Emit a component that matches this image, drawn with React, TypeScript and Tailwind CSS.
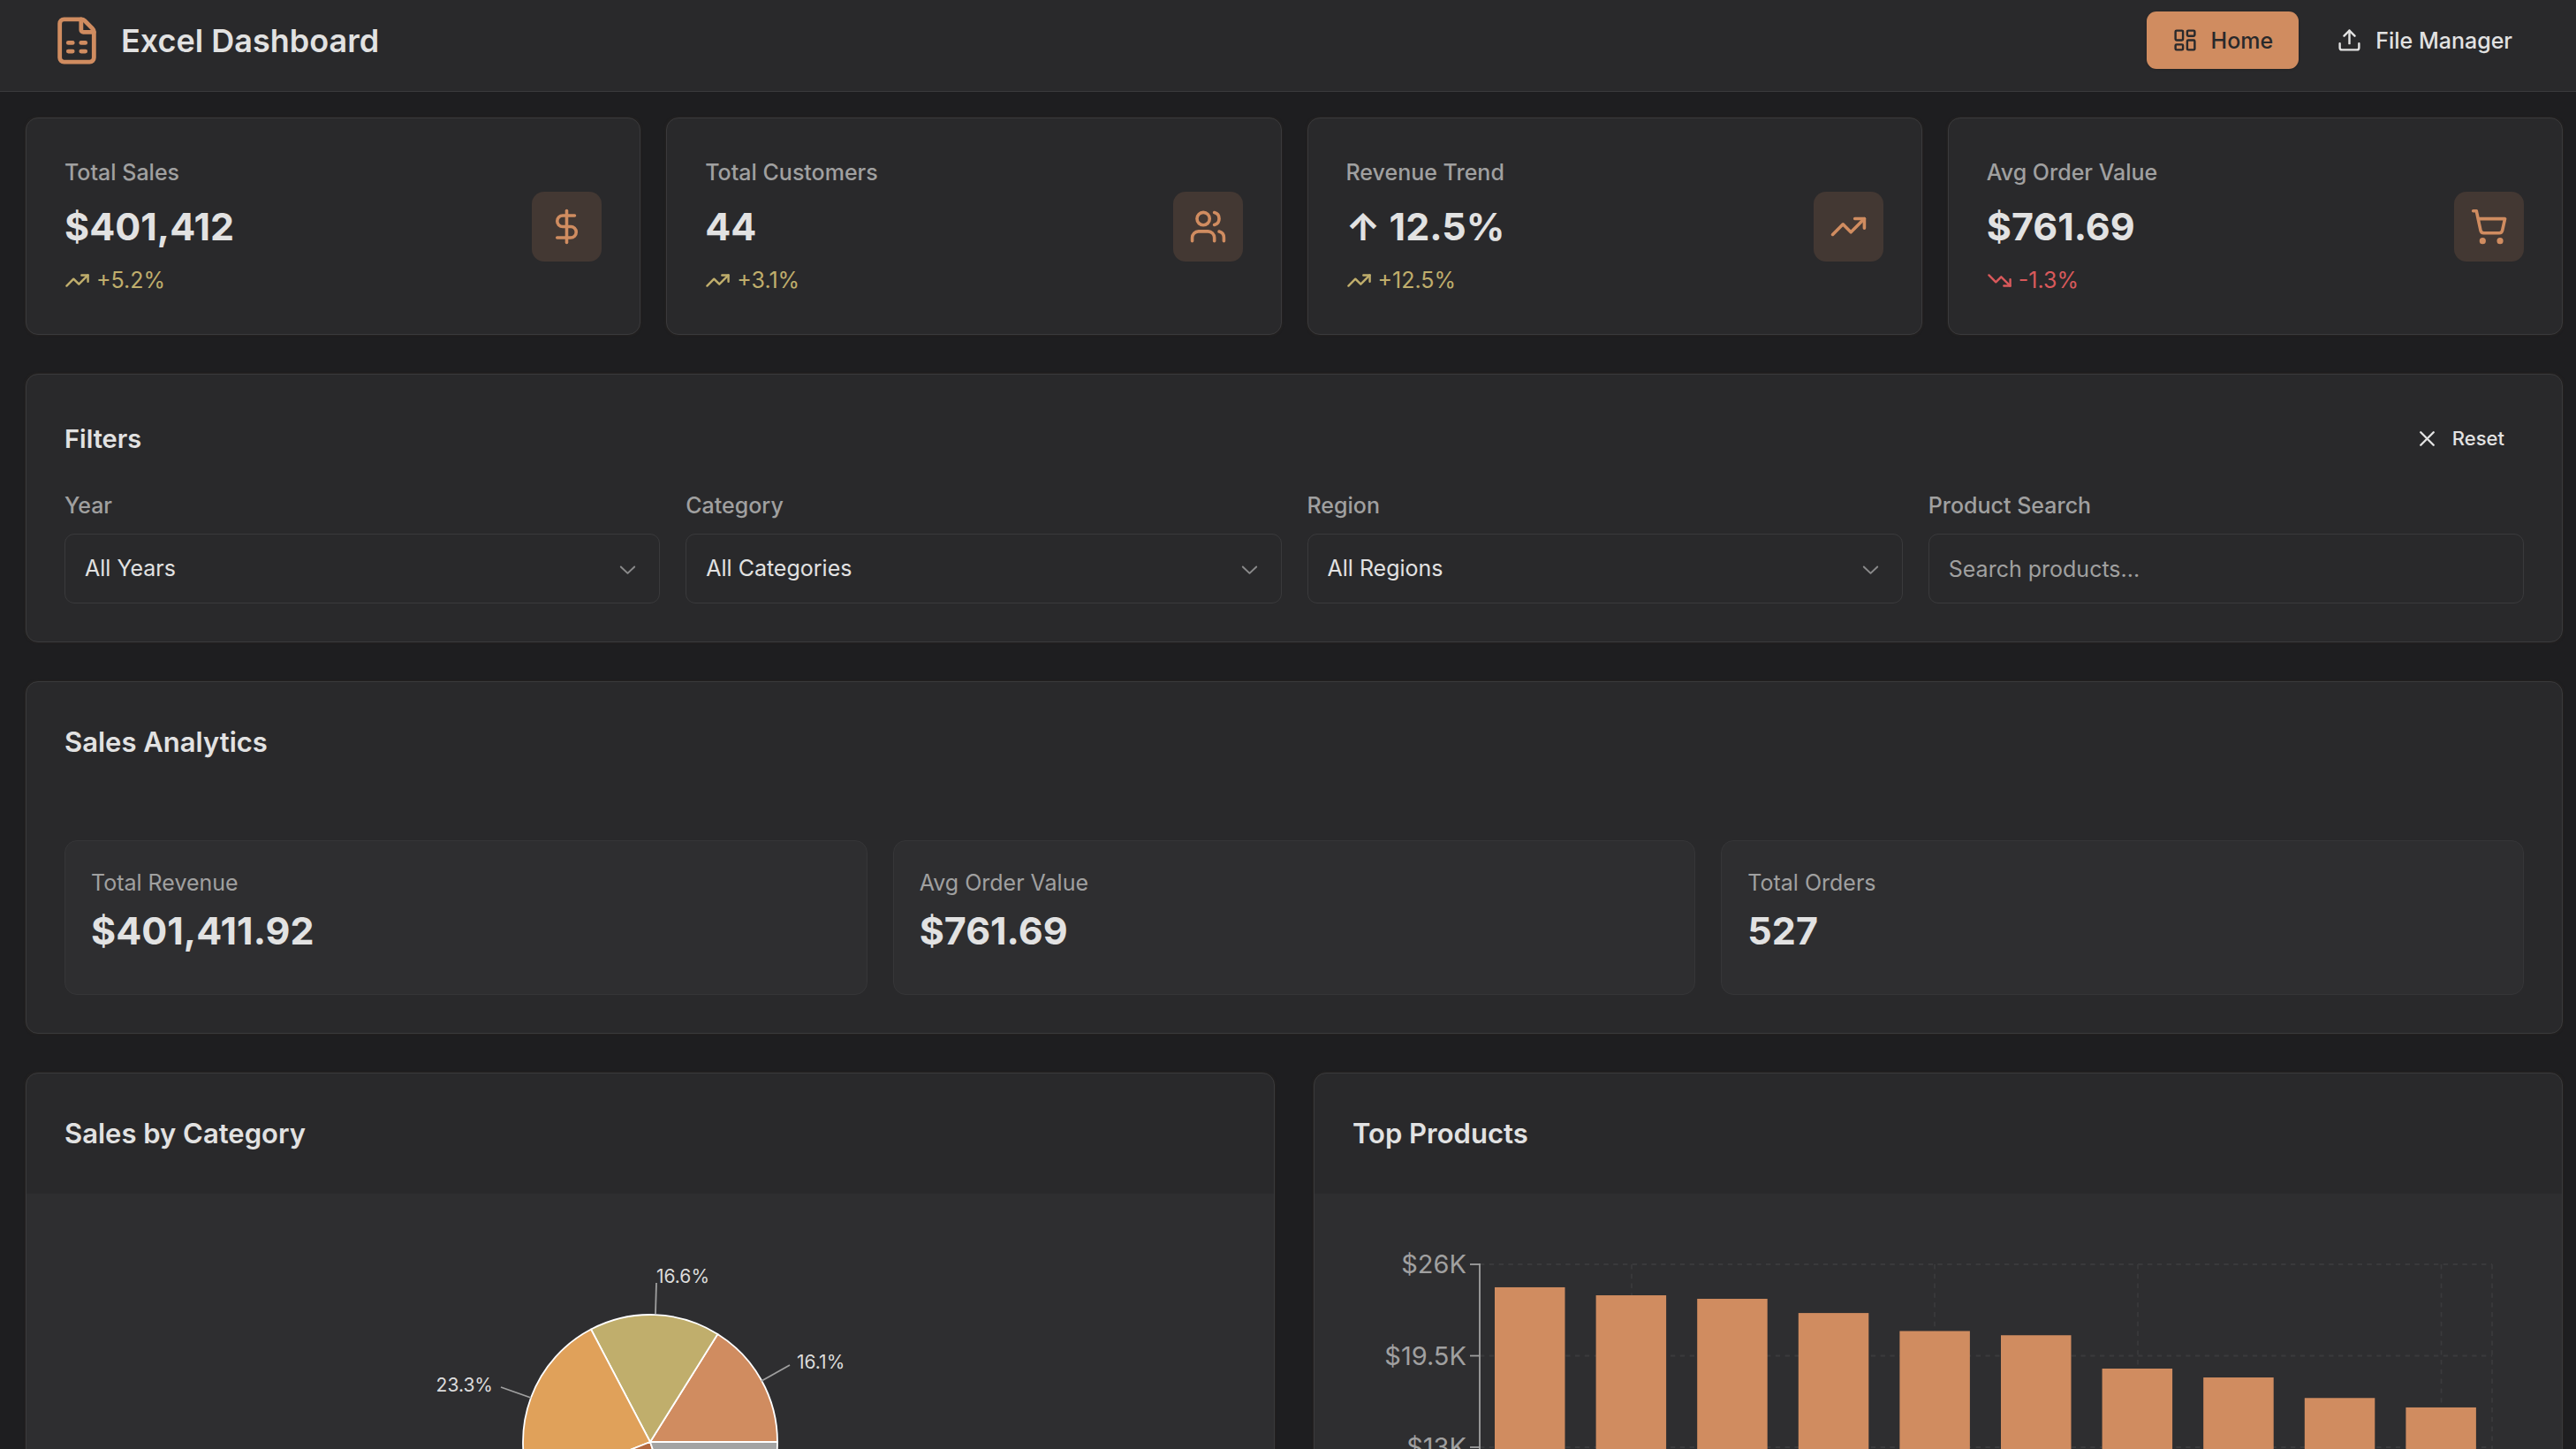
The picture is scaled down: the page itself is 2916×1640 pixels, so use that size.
import React from 'react';
import {
  DollarSign,
  FileSpreadsheet,
  LayoutDashboard,
  ShoppingCart,
  TrendingDown,
  TrendingUp,
  Upload,
  Users,
  X,
  type LucideIcon,
} from 'lucide-react';

type Stat = {
  label: string;
  value: string;
  change: string;
  up: boolean;
  icon: LucideIcon;
};

const stats: Stat[] = [
  { label: 'Total Sales', value: '$401,412', change: '+5.2%', up: true, icon: DollarSign },
  { label: 'Total Customers', value: '44', change: '+3.1%', up: true, icon: Users },
  { label: 'Revenue Trend', value: '↑ 12.5%', change: '+12.5%', up: true, icon: TrendingUp },
  { label: 'Avg Order Value', value: '$761.69', change: '-1.3%', up: false, icon: ShoppingCart },
];

const filters = [
  { id: 'year', label: 'Year', options: ['All Years'] },
  { id: 'category', label: 'Category', options: ['All Categories'] },
  { id: 'region', label: 'Region', options: ['All Regions'] },
];

const analytics = [
  { label: 'Total Revenue', value: '$401,411.92' },
  { label: 'Avg Order Value', value: '$761.69' },
  { label: 'Total Orders', value: '527' },
];

const slices = [
  { percent: 16.1, color: '#d08c60' },
  { percent: 16.6, color: '#c0ae6c' },
  { percent: 23.3, color: '#e0a15a' },
  { percent: 24.2, color: '#b3683f' },
  { percent: 19.8, color: '#a3a3a3' },
];

// sales per product, in thousands
const products = [24.37, 23.8, 23.55, 22.54, 21.26, 20.96, 18.59, 17.96, 16.5, 15.83];

const Header: React.FC = () => (
  <header className="flex items-center justify-between border-b border-[#3a3a3c] bg-[#29292b] pt-[13px] pr-[43px] pb-[25px] pl-[58px]">
    <div className="flex items-center gap-[21px]">
      <FileSpreadsheet size={58} className="text-[#d08c60]" />
      <h1 className="text-[36px] leading-[50px] font-semibold">Excel Dashboard</h1>
    </div>
    <nav className="flex gap-[14px] text-[25px] leading-9 font-medium">
      <a href="#home" className="flex h-[65px] items-center gap-[15px] rounded-[11px] bg-[#d08c60] px-[29px] text-[#29292b] shadow">
        <LayoutDashboard size={29} />
        Home
      </a>
      <a href="#files" className="flex h-[65px] items-center gap-[15px] rounded-[11px] px-[29px]">
        <Upload size={29} />
        File Manager
      </a>
    </nav>
  </header>
);

const StatCard: React.FC<{ stat: Stat }> = ({ stat }) => {
  const Icon = stat.icon;
  const Trend = stat.up ? TrendingUp : TrendingDown;

  return (
    <div className="flex items-center justify-between rounded-[14px] border border-[#3a3a3c] bg-[#29292b] p-[43px] shadow-[0_0_3px_#2b2622]">
      <div className="flex flex-col gap-[14px]">
        <p className="text-[25px] leading-9 font-medium text-[#a0a0a0]">{stat.label}</p>
        <p className="text-[43px] leading-[58px] font-bold">{stat.value}</p>
        <p className={`flex items-center gap-[7px] text-[25px] leading-9 ${stat.up ? 'text-[#c0ae6c]' : 'text-[#d9595b]'}`}>
          <Trend size={29} />
          {stat.change}
        </p>
      </div>
      <div className="rounded-[14px] bg-[#433833] p-[18px] text-[#d08c60]">
        <Icon size={43} />
      </div>
    </div>
  );
};

const Filters: React.FC = () => (
  <section className="rounded-[14px] border border-[#3a3a3c] bg-[#29292b] p-[43px] shadow-[0_0_3px_#2b2622]">
    <div className="mb-[29px] flex items-center justify-between">
      <h2 className="text-[29px] leading-[43px] font-semibold">Filters</h2>
      <button type="button" className="flex h-[58px] items-center gap-[14px] px-[22px] text-[22px] font-medium">
        <X size={29} />
        Reset
      </button>
    </div>
    <div className="grid grid-cols-4 gap-[29px]">
      {filters.map((filter) => (
        <div key={filter.id} className="flex flex-col gap-[14px]">
          <label htmlFor={filter.id} className="text-[25px] leading-9 font-medium text-[#a0a0a0]">
            {filter.label}
          </label>
          <div className="relative">
            <select id={filter.id} className="block h-[79px] w-full appearance-none rounded-[11px] border border-[#3a3a3c] bg-[#29292b] px-[22px] text-[25px]">
              {filter.options.map((option) => (
                <option key={option}>{option}</option>
              ))}
            </select>
            <svg viewBox="0 0 15 15" className="pointer-events-none absolute top-[25px] right-[22px] size-[29px] fill-[#8a8a8b]">
              <path d="M3.13523 6.15803C3.3241 5.95657 3.64052 5.94637 3.84197 6.13523L7.5 9.56464L11.158 6.13523C11.3595 5.94637 11.6759 5.95657 11.8648 6.15803C12.0536 6.35949 12.0434 6.67591 11.842 6.86477L7.84197 10.6148C7.64964 10.7951 7.35036 10.7951 7.15803 10.6148L3.15803 6.86477C2.95657 6.67591 2.94637 6.35949 3.13523 6.15803Z" />
            </svg>
          </div>
        </div>
      ))}
      <div className="flex flex-col gap-[14px]">
        <label htmlFor="search" className="text-[25px] leading-9 font-medium text-[#a0a0a0]">
          Product Search
        </label>
        <input
          id="search"
          type="text"
          placeholder="Search products..."
          className="h-[79px] w-full rounded-[11px] border border-[#3a3a3c] px-[22px] text-[25px] placeholder:text-[#a0a0a0]"
        />
      </div>
    </div>
  </section>
);

const SalesAnalytics: React.FC = () => (
  <section className="rounded-[14px] border border-[#3a3a3c] bg-[#29292b] p-[43px] shadow-[0_0_3px_#2b2622]">
    <h2 className="text-[31px] leading-[50px] font-semibold">Sales Analytics</h2>
    <div className="mt-[86px] grid grid-cols-3 gap-[29px]">
      {analytics.map((item) => (
        <div key={item.label} className="rounded-[14px] border border-[#363638] bg-[#2e2e30] px-[29px] pt-[29px] pb-[43px]">
          <p className="text-[25px] leading-9 text-[#a0a0a0]">{item.label}</p>
          <p className="mt-[7px] text-[43px] leading-[58px] font-bold">{item.value}</p>
        </div>
      ))}
    </div>
  </section>
);

const PIE_X = 706;
const PIE_Y = 281;
const PIE_R = 144;

const pointAt = (percent: number) => {
  const angle = (percent / 100) * Math.PI * 2;
  return `${PIE_X + PIE_R * Math.cos(angle)} ${PIE_Y - PIE_R * Math.sin(angle)}`;
};

const CategoryChart: React.FC = () => {
  let total = 0;

  return (
    <svg viewBox="0 0 1412 590" className="block w-full" role="img" aria-label="Sales by Category">
      {slices.map((slice) => {
        const start = total;
        total += slice.percent;
        return (
          <path
            key={slice.color}
            d={`M${PIE_X} ${PIE_Y} L${pointAt(start)} A${PIE_R} ${PIE_R} 0 0 0 ${pointAt(total)} Z`}
            fill={slice.color}
            stroke="#fff"
            strokeWidth="1.8"
            strokeLinejoin="round"
          />
        );
      })}
      <g stroke="#a0a0a0" strokeWidth="1.8">
        <path d="M832 212L864 194" />
        <path d="M712 136L713 101" />
        <path d="M571 231L537 219" />
      </g>
      <g className="text-[21px]" fill="#dcdcdc">
        <text x="872" y="198">16.1%</text>
        <text x="713" y="101">16.6%</text>
        <text x="528" y="224" textAnchor="end">23.3%</text>
      </g>
    </svg>
  );
};

const ProductsChart: React.FC = () => (
  <svg viewBox="0 0 1412 590" className="block w-full" role="img" aria-label="Top Products">
    <g stroke="#3a3a3c" strokeWidth="1.8" strokeDasharray="5.4 5.4">
      {[80, 183.5, 287, 390.5].map((y) => (
        <path key={y} d={`M187 ${y}H1333`} />
      ))}
      {[359, 702, 932, 1275.5, 1333].map((x) => (
        <path key={x} d={`M${x} 80V494`} />
      ))}
    </g>
    <g stroke="#a0a0a0" strokeWidth="1.8">
      {[80, 183.5, 287, 390.5, 494].map((y) => (
        <path key={y} d={`M176 ${y}H187`} />
      ))}
      <path d="M187 79V494H1333" fill="none" />
    </g>
    <g className="text-[29px]" fill="#a0a0a0" textAnchor="end">
      <text x="172" y="90">$26K</text>
      <text x="172" y="194">$19.5K</text>
      <text x="172" y="297">$13K</text>
      <text x="172" y="401">$6.5K</text>
      <text x="172" y="504">$0K</text>
    </g>
    {products.map((value, index) => {
      const height = (value / 26) * 414;
      return <rect key={value} x={204 + index * 114.6} y={494 - height} width="79.5" height={height} fill="#d08c60" />;
    })}
  </svg>
);

const ChartCard: React.FC<{ title: string; children: React.ReactNode }> = ({ title, children }) => (
  <section className="overflow-hidden rounded-[14px] border border-[#3a3a3c] bg-[#29292b] shadow-[0_0_3px_#2b2622]">
    <h2 className="p-[43px] text-[31px] leading-[50px] font-semibold">{title}</h2>
    <div className="bg-[#2e2e30]">{children}</div>
  </section>
);

export default function App() {
  return (
    <div className="h-screen overflow-hidden bg-[#1e1e20] font-[Inter,sans-serif] text-[#e2e2e2]">
      <Header />
      <main className="flex flex-col gap-[44px] pt-[29px] pr-[15px] pb-[29px] pl-[29px]">
        <div className="grid grid-cols-4 gap-[29px]">
          {stats.map((stat) => (
            <StatCard key={stat.label} stat={stat} />
          ))}
        </div>
        <Filters />
        <SalesAnalytics />
        <div className="grid grid-cols-2 gap-[44px]">
          <ChartCard title="Sales by Category">
            <CategoryChart />
          </ChartCard>
          <ChartCard title="Top Products">
            <ProductsChart />
          </ChartCard>
        </div>
      </main>
    </div>
  );
}
